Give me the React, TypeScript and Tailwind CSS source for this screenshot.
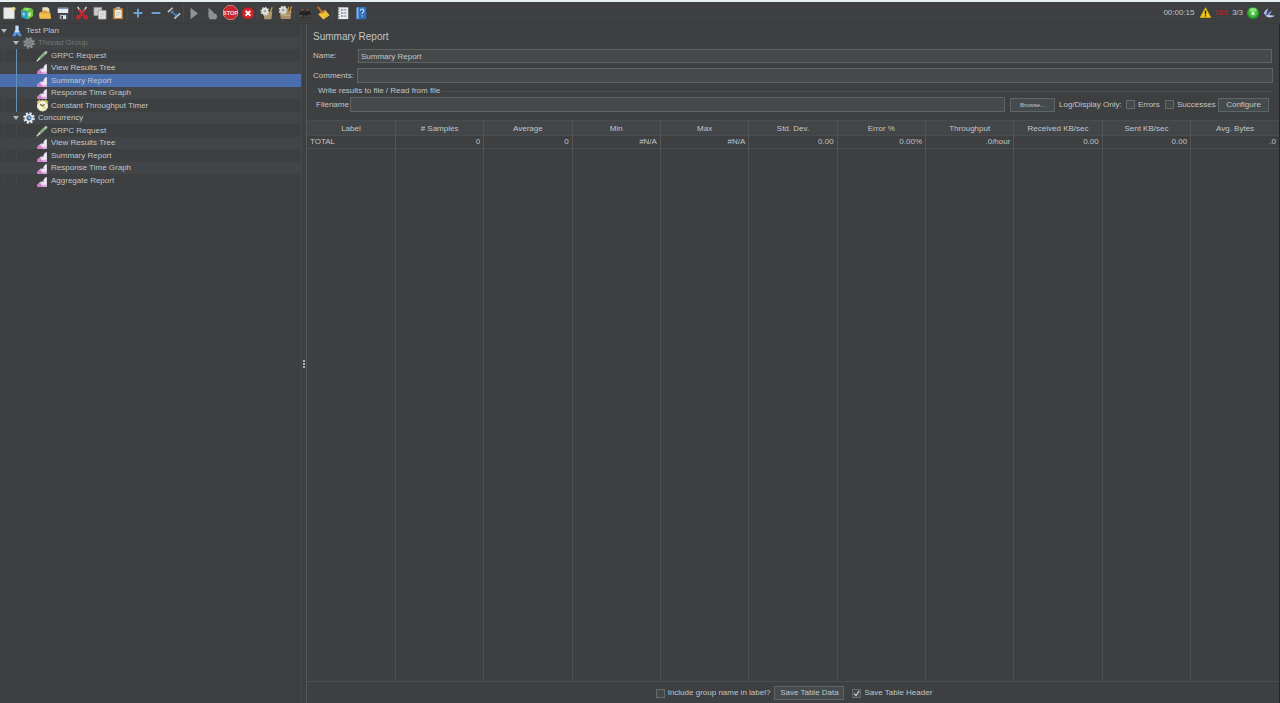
import React, { useState } from 'react';
import clsx from 'clsx';

type IconProps = { children: React.ReactNode; className?: string };

function Icon({ children, className }: IconProps) {
  return (
    <svg viewBox="0 0 16 16" className={clsx('shrink-0', className ?? 'size-[14px]')} aria-hidden="true">
      {children}
    </svg>
  );
}

const NewIcon = () => (
  <Icon>
    <path d="M2 2h12v12.500H2z" fill="#e9ebea" />
    <path d="M2 2h12v12.500H2z" fill="none" stroke="#c9cccb" strokeWidth=".7" />
    <circle cx="13.500" cy="3" r="2" fill="#f0e07a" />
  </Icon>
);

const TemplatesIcon = () => (
  <Icon>
    <path d="M1 5l4-3.500 9 1.200 1 8.300-5 4-8-2z" fill="#4fae3a" />
    <path d="M1 5l7 1.500V15L2 13z" fill="#2e9fc4" />
    <path d="M8 6.500L15 4v7.500L8.500 15z" fill="#6cc644" />
    <path d="M3 4l4-2 6 1.500-4.500 2z" fill="#9be06a" />
    <path d="M9.500 8l3-1v4l-3 1z" fill="#c4ecad" />
    <path d="M3 7.500l2.500.5v3L3 10.500z" fill="#8fd6ea" />
  </Icon>
);

const OpenIcon = () => (
  <Icon>
    <path d="M5 1.500h6l2 2V8H5z" fill="#e8e0c4" />
    <path d="M2 6.500h3l1-1.500h3.500l1 1.500H14V14H2z" fill="#d9a03b" />
    <path d="M1 8.500h13L15 14.500H2z" fill="#f2bd4e" />
  </Icon>
);

const SaveIcon = () => (
  <Icon>
    <path d="M2 2h12v6H2z" fill="#e6e9ee" />
    <path d="M2 2h12v1.500H2z" fill="#8294b5" />
    <path d="M3 9h10.500v6H3z" fill="#4e5964" />
    <path d="M5 10.500h6.500V15H5z" fill="#dfe3e6" />
    <path d="M6 11.500h2V15H6z" fill="#39434d" />
  </Icon>
);

const CutIcon = () => (
  <Icon>
    <path d="M3 1l5 8M13 1L8 9" stroke="#d8d8d8" strokeWidth="1.800" />
    <path d="M4 4l7.500 9M12 4l-7.500 9" stroke="#c9222a" strokeWidth="2.200" />
    <circle cx="3.800" cy="12.800" r="1.700" fill="none" stroke="#d3242b" strokeWidth="1.800" />
    <circle cx="12.200" cy="12.800" r="1.700" fill="none" stroke="#d3242b" strokeWidth="1.800" />
  </Icon>
);

const CopyIcon = () => (
  <Icon>
    <path d="M1 1.500h9V11H1z" fill="#c9cbc8" stroke="#8c8e8c" strokeWidth=".8" />
    <path d="M6 5h9v10H6z" fill="#e4e5e1" stroke="#8c8e8c" strokeWidth=".8" />
    <path d="M8 8h5M8 10h5M8 12h3" stroke="#b8bab6" strokeWidth=".8" />
  </Icon>
);

const PasteIcon = () => (
  <Icon>
    <path d="M2.500 2.500h11V15h-11z" fill="#c78b35" />
    <path d="M4.500 4.500h7.500v9H4.500z" fill="#f0eee6" />
    <path d="M5.500 1h5v3h-5z" fill="#a9aaa6" />
    <path d="M6 7h5M6 9h5M6 11h3" stroke="#b6b6b0" strokeWidth=".8" />
  </Icon>
);

const PlusIcon = () => (
  <Icon>
    <path d="M8 3v10M3 8h10" stroke="#6fa3d8" strokeWidth="2.200" />
  </Icon>
);

const MinusIcon = () => (
  <Icon>
    <path d="M3 8h10" stroke="#6fa3d8" strokeWidth="2.200" />
  </Icon>
);

const ToggleIcon = () => (
  <Icon>
    <path d="M1 7l5.500-5M8.500 14.500L15 8.500" stroke="#c4c8c6" strokeWidth="1.800" />
    <path d="M5 6l6 5.500" stroke="#4b86c6" strokeWidth="1.400" />
    <path d="M5 9V6H8M11 8.500v3H8" stroke="#4b86c6" strokeWidth="1" fill="none" />
  </Icon>
);

const StartIcon = () => (
  <Icon>
    <path d="M4 2l8.500 6.500L4 15z" fill="#8f9293" />
  </Icon>
);

const StartNoPausesIcon = () => (
  <Icon>
    <path d="M4 2l6 5.500L4 13z" fill="#8f9293" />
    <path d="M4 8h5l4 1.500 1 3-1.500 2.500H5z" fill="#8f9293" />
  </Icon>
);

const StopIcon = () => (
  <Icon className="size-[15px]">
    <path d="M5 .5h6L15.500 5v6L11 15.500H5L.5 11V5z" fill="#c9252d" stroke="#dd9a9c" strokeWidth=".8" />
    <text x="8" y="10.300" textAnchor="middle" fontSize="6" fontWeight="700" fill="#f2dede">
      STOP
    </text>
  </Icon>
);

const ShutdownIcon = () => (
  <Icon>
    <path d="M5 2h6l3.500 3.500v5.500L11 14.500H5L1.500 11V5.500z" fill="#d8232a" stroke="#b3151c" strokeWidth=".6" />
    <path d="M5.300 5.500l5.400 5.500M10.700 5.500L5.300 11" stroke="#fff" strokeWidth="2.200" />
  </Icon>
);

const ClearIcon = () => (
  <Icon>
    <path d="M4 8l10-1.500L13 15H5z" fill="#b09a72" />
    <circle cx="5.500" cy="6" r="2.600" fill="#9b9c94" stroke="#e0e1dc" strokeWidth="2.600" />
    <circle cx="5.500" cy="6" r="4.400" fill="none" stroke="#e0e1dc" strokeWidth="1.400" strokeDasharray="1.700 1.700" />
    <path d="M14 1.500L11.500 8" stroke="#c49648" strokeWidth="1.600" />
  </Icon>
);

const ClearAllIcon = () => (
  <Icon className="size-[15px]">
    <path d="M2 9l4-2 8.500-1L13.500 15H3z" fill="#a98e68" />
    <circle cx="5.500" cy="5.500" r="2.600" fill="#9b9c94" stroke="#d9dad5" strokeWidth="2.400" />
    <circle cx="5.500" cy="5.500" r="4.200" fill="none" stroke="#d9dad5" strokeWidth="1.300" strokeDasharray="1.700 1.700" />
    <path d="M14.500 1.500L12.500 7M11.500 2L10 7" stroke="#c49648" strokeWidth="1.400" />
    <path d="M5 11h7.500" stroke="#c7b18a" strokeWidth="1.200" />
  </Icon>
);

const SearchIcon = () => (
  <Icon>
    <path d="M3.500 4H7l.5 3h1L9 4h3.500L15 11l-1 2h-4l-1-2.500H7L6 13H2l-1-2z" fill="#222324" />
    <path d="M3.500 4.500H6.500M9.500 4.500h3" stroke="#8a5a3a" strokeWidth="1.600" />
    <path d="M1.500 11.500h4M10.500 11.500h4" stroke="#6c5a50" strokeWidth="1.800" />
  </Icon>
);

const BroomIcon = () => (
  <Icon>
    <path d="M2 1l5.500 6.500" stroke="#c8702c" strokeWidth="2" />
    <path d="M2.500 9.500L10.500 4.500l5 6-7 5z" fill="#f2c63a" />
    <path d="M5 8L10.500 4.500l1.300 1.500-5.500 3.600z" fill="#e0813a" />
    <path d="M9 11l2 2.500M11 9.500l2 2" stroke="#c4931f" strokeWidth=".8" />
  </Icon>
);

const FunctionHelperIcon = () => (
  <Icon>
    <path d="M2.500 1.500h11.500v13.500H2.500z" fill="#eceeee" />
    <path d="M1 3.500h3M1 6.500h3M1 9.500h3M1 12.500h3" stroke="#4f5458" strokeWidth="1" />
    <path d="M6 4.500h1.500M6 8h1.500M6 11.500h1.500" stroke="#2f5f9e" strokeWidth="1.600" />
    <path d="M8.500 4.500H12M8.500 8H12M8.500 11.500H12" stroke="#75797b" strokeWidth="1" />
  </Icon>
);

const HelpIcon = () => (
  <Icon>
    <path d="M3 2l2-1h9v13l-1 1H3z" fill="#2d6fc0" />
    <path d="M3 2l2-1v13l-2 1z" fill="#8db8e8" />
    <path d="M7.300 5.500c0-2.500 4-2.500 4 0 0 1.500-2 1.500-2 3.500M9.300 10.500v1.700" stroke="#b9d3f0" strokeWidth="1.400" fill="none" />
  </Icon>
);

const WarningIcon = () => (
  <Icon className="size-[13px]">
    <path d="M8 2l6.500 12h-13z" fill="#f3cb1b" stroke="#d8ad10" strokeLinejoin="round" />
    <path d="M8 5.500v5M8 11.500V13" stroke="#30290a" strokeWidth="1.800" />
  </Icon>
);

const RunningIcon = () => (
  <Icon>
    <circle cx="8" cy="8" r="7" fill="#249a2b" />
    <circle cx="8" cy="7.500" r="5.200" fill="#4ac144" />
    <ellipse cx="8" cy="4.500" rx="4" ry="2.200" fill="#8be07e" />
    <circle cx="8" cy="8.500" r="1.900" fill="#dff8d8" />
  </Icon>
);

const FeatherIcon = () => (
  <Icon className="size-3">
    <path d="M1 9C1.500 5.500 4 3 7 2 5.500 5 5 8 4.500 11z" fill="#a9b6ec" />
    <path d="M5 12C6 8.500 8.500 6 12 5c-1.500 2.500-3 5-4 7.500z" fill="#8497e0" />
    <path d="M3 11c2 3.500 8 4 12.500.500-2 0-5-.500-7-.500z" fill="#c2cbf4" />
  </Icon>
);

const FlaskIcon = () => (
  <Icon className="size-3">
    <path d="M6 1h4v5l4.500 9H10l-2-3.500L6 15H1.500L6 6z" fill="#4f94dd" />
    <path d="M6 1h4v5.500l1.500 3h-7L6 6.500z" fill="#c4dff6" />
  </Icon>
);

function GearIcon({ body, core }: { body: string; core: string }) {
  return (
    <Icon className="size-3">
      <circle cx="8" cy="8" r="6.500" fill="none" stroke={body} strokeWidth="2.600" strokeDasharray="2.800 2.300" />
      <circle cx="8" cy="8" r="4.500" fill="none" stroke={body} strokeWidth="2.600" />
      <circle cx="8" cy="8" r="3.200" fill={core} />
      <path d="M8 5.500v2.800h2.500" stroke={body} strokeWidth="1.200" fill="none" />
    </Icon>
  );
}

const SamplerIcon = () => (
  <Icon className="size-3">
    <path d="M4.500 11.500L13.500 3" stroke="#b4c4b0" strokeWidth="3.400" strokeLinecap="round" />
    <path d="M5 11.500L12 5" stroke="#5aa455" strokeWidth="1.600" />
    <path d="M1 15L4.500 11.500" stroke="#dfe2df" strokeWidth="1.600" />
  </Icon>
);

const ChartIcon = () => (
  <Icon className="size-3">
    <path d="M2 15.500v-3l3-2.500 1.500-1.500L9 9l2-4 2-2h1.500v12.500z" fill="#f1eaf5" />
    <path d="M2 15.500V13l2.500-2H7v2.500l2-.500v2.500z" fill="#d277cc" />
    <path d="M9.500 15.500V13h5v2.500z" fill="#dcaae0" />
    <path d="M6.500 10.500l2.500-2.500 2 1" stroke="#a77bd0" strokeWidth="1" fill="none" />
  </Icon>
);

const TimerIcon = () => (
  <Icon className="size-[13px]">
    <circle cx="8" cy="8.500" r="6.200" fill="#f4f2e4" stroke="#e6dfba" strokeWidth="1.400" />
    <path d="M1.500 4.500L5 1.500M14.500 4.500L11 1.500" stroke="#e2c552" strokeWidth="2.200" />
    <path d="M5 6.500l3 2 2.500-2" stroke="#7a6a2c" strokeWidth="1.600" fill="none" />
    <path d="M8 8.500l4 1-2 4z" fill="#e8d26a" />
  </Icon>
);

const toolbarGroups = [
  {
    className: '',
    items: [
      { label: 'New', icon: <NewIcon /> },
      { label: 'Templates', icon: <TemplatesIcon /> },
      { label: 'Open', icon: <OpenIcon /> },
      { label: 'Save', icon: <SaveIcon /> },
    ],
  },
  {
    className: '',
    items: [
      { label: 'Cut', icon: <CutIcon /> },
      { label: 'Copy', icon: <CopyIcon /> },
      { label: 'Paste', icon: <PasteIcon /> },
    ],
  },
  {
    className: 'pl-px',
    items: [
      { label: 'Expand All', icon: <PlusIcon /> },
      { label: 'Collapse All', icon: <MinusIcon /> },
      { label: 'Toggle', icon: <ToggleIcon /> },
    ],
  },
  {
    className: 'pl-px',
    items: [
      { label: 'Start', icon: <StartIcon /> },
      { label: 'Start no pauses', icon: <StartNoPausesIcon /> },
      { label: 'Stop', icon: <StopIcon /> },
      { label: 'Shutdown', icon: <ShutdownIcon /> },
    ],
  },
  {
    className: '',
    items: [
      { label: 'Clear', icon: <ClearIcon /> },
      { label: 'Clear All', icon: <ClearAllIcon /> },
    ],
  },
  {
    className: 'pl-px',
    items: [
      { label: 'Search', icon: <SearchIcon /> },
      { label: 'Reset Search', icon: <BroomIcon /> },
    ],
  },
  {
    className: 'pl-px',
    items: [
      { label: 'Function Helper', icon: <FunctionHelperIcon /> },
      { label: 'Help', icon: <HelpIcon /> },
    ],
  },
];

interface TreeNode {
  label: string;
  level: number;
  icon: React.ReactNode;
  disabled?: boolean;
  active?: boolean;
}

const treeNodes: TreeNode[] = [
  { label: 'Test Plan', level: 0, icon: <FlaskIcon /> },
  { label: 'Thread Group', level: 1, icon: <GearIcon body="#8b8e8f" core="#7c7f80" />, disabled: true },
  { label: 'GRPC Request', level: 2, icon: <SamplerIcon />, active: true },
  { label: 'View Results Tree', level: 2, icon: <ChartIcon />, active: true },
  { label: 'Summary Report', level: 2, icon: <ChartIcon />, active: true },
  { label: 'Response Time Graph', level: 2, icon: <ChartIcon />, active: true },
  { label: 'Constant Throughput Timer', level: 2, icon: <TimerIcon />, active: true },
  { label: 'Concurrency', level: 1, icon: <GearIcon body="#dfe7ee" core="#3f6f9e" /> },
  { label: 'GRPC Request', level: 2, icon: <SamplerIcon /> },
  { label: 'View Results Tree', level: 2, icon: <ChartIcon /> },
  { label: 'Summary Report', level: 2, icon: <ChartIcon /> },
  { label: 'Response Time Graph', level: 2, icon: <ChartIcon /> },
  { label: 'Aggregate Report', level: 2, icon: <ChartIcon /> },
];

const columns = [
  { title: 'Label', total: 'TOTAL' },
  { title: '# Samples', total: '0' },
  { title: 'Average', total: '0' },
  { title: 'Min', total: '#N/A' },
  { title: 'Max', total: '#N/A' },
  { title: 'Std. Dev.', total: '0.00' },
  { title: 'Error %', total: '0.00%' },
  { title: 'Throughput', total: '.0/hour' },
  { title: 'Received KB/sec', total: '0.00' },
  { title: 'Sent KB/sec', total: '0.00' },
  { title: 'Avg. Bytes', total: '.0' },
];

const fieldClass = 'min-w-0 flex-1 border border-[#5f6364] bg-[#45494a] px-[2px] outline-none';
const buttonClass = 'flex h-[14px] items-center justify-center border border-[#5f6668] bg-[#454b4d] whitespace-nowrap';

function Toolbar() {
  return (
    <header className="flex h-[22px] items-center border-b border-[#393b3d] pr-[5px]">
      {toolbarGroups.map((group, i) => (
        <div
          key={i}
          className={clsx('flex items-center', group.className, i > 0 && 'border-l border-[#47494b]')}
        >
          {group.items.map((item) => (
            <button key={item.label} type="button" aria-label={item.label} className="flex w-[18px] justify-center">
              {item.icon}
            </button>
          ))}
        </div>
      ))}
      <div className="ml-auto flex items-center">
        <span>00:00:15</span>
        <span className="ml-1 flex">
          <WarningIcon />
        </span>
        <span className="ml-[3px] text-[#c01f26]">765</span>
        <span className="ml-1">3/3</span>
        <span className="ml-[3px] flex">
          <RunningIcon />
        </span>
        <span className="ml-[3px] flex">
          <FeatherIcon />
        </span>
      </div>
    </header>
  );
}

function TestTree() {
  const [selected, setSelected] = useState(4);

  return (
    <nav className="w-[301px] shrink-0" aria-label="Test plan">
      <ul>
        {treeNodes.map((node, i) => (
          <li
            key={i}
            onClick={() => setSelected(i)}
            className={clsx(
              'flex h-3 cursor-default items-center odd:h-[13px]',
              i === selected ? 'bg-[#4b6eaf]' : i % 2 === 1 && 'bg-[#414547]',
              node.disabled && 'text-[#727576]'
            )}
          >
            {node.level > 0 && (
              <span className="flex w-3 self-stretch pl-1">
                <span className={clsx('w-px', i !== selected && 'bg-[#434648]')} />
              </span>
            )}
            {node.level > 1 && (
              <span className="flex w-[13px] self-stretch pl-1">
                <span className={clsx('w-px', node.active ? 'bg-[#6593b8]' : 'bg-[#434648]')} />
              </span>
            )}
            <span className="flex w-[11px] pl-px">
              {node.level < 2 && (
                <svg viewBox="0 0 6 4" className="h-1 w-1.5" aria-hidden="true">
                  <path d="M0 0h6L3 4z" fill="#b4b6b7" />
                </svg>
              )}
            </span>
            <span className="flex w-3 justify-center">{node.icon}</span>
            <span className="ml-[3px] whitespace-nowrap">{node.label}</span>
          </li>
        ))}
      </ul>
    </nav>
  );
}

function CheckBox({ label, defaultChecked }: { label: string; defaultChecked?: boolean }) {
  return (
    <label className="flex items-center gap-[3px] whitespace-nowrap">
      <span className="grid">
        <input
          type="checkbox"
          defaultChecked={defaultChecked}
          className="peer col-start-1 row-start-1 size-[9px] appearance-none border border-[#666a6b] bg-[#43494a]"
        />
        <svg
          viewBox="0 0 9 9"
          className="pointer-events-none invisible col-start-1 row-start-1 size-[9px] peer-checked:visible"
          aria-hidden="true"
        >
          <path d="M2 4.500l2 2.200L7.200 1.800" fill="none" stroke="#c4c6c6" strokeWidth="1.200" />
        </svg>
      </span>
      {label}
    </label>
  );
}

function ReportForm() {
  return (
    <div className="flex flex-col pr-[6px] pl-[6px]">
      <h1 className="mt-[6px] text-[10px] leading-[14px]">Summary Report</h1>
      <div className="mt-[5px] mr-px flex h-[14px] items-center">
        <label htmlFor="name" className="w-[45px]">
          Name:
        </label>
        <input id="name" defaultValue="Summary Report" className={clsx(fieldClass, 'h-[14px]')} />
      </div>
      <div className="mt-[5px] flex h-[15px] items-center">
        <label htmlFor="comments" className="w-11">
          Comments:
        </label>
        <input id="comments" className={clsx(fieldClass, 'h-[15px]')} />
      </div>
      <fieldset className="mt-[3px] min-w-0 border-t border-[#4c4f50]">
        <legend className="ml-[3px] px-[2px] leading-[10px]">Write results to file / Read from file</legend>
        <div className="flex items-center pt-px pr-1 pl-[3px]">
          <label htmlFor="filename" className="w-[34px]">
            Filename
          </label>
          <input id="filename" className={clsx(fieldClass, 'h-[15px]')} />
          <button type="button" className={clsx(buttonClass, 'ml-[5px] w-[45px] text-[6px]')}>
            Browse...
          </button>
          <span className="ml-1 w-[67px] whitespace-nowrap">Log/Display Only:</span>
          <span className="flex w-[39px]">
            <CheckBox label="Errors" />
          </span>
          <span className="flex w-[53px]">
            <CheckBox label="Successes" />
          </span>
          <button type="button" className={clsx(buttonClass, 'w-[51px]')}>
            Configure
          </button>
        </div>
      </fieldset>
    </div>
  );
}

function ResultsTable() {
  return (
    <div className="mt-2 min-h-0 flex-1">
      <table className="h-full w-full table-fixed border-collapse border-b border-[#4a4d4f]">
        <thead>
          <tr className="h-[15px] border-y border-[#4a4d4f] bg-[#434648]">
            {columns.map((col) => (
              <th key={col.title} scope="col" className="border-r border-[#525557] p-0 pt-px text-center font-normal last:border-r-0">
                {col.title}
              </th>
            ))}
          </tr>
        </thead>
        <tbody>
          <tr className="h-[13px] border-b border-[#4a4d4f]">
            {columns.map((col) => (
              <td
                key={col.title}
                className="border-r border-[#525557] px-[3px] py-0 text-right first:text-left last:border-r-0"
              >
                {col.total}
              </td>
            ))}
          </tr>
          <tr>
            {columns.map((col) => (
              <td key={col.title} className="border-r border-[#4d5052] p-0 last:border-r-0" />
            ))}
          </tr>
        </tbody>
      </table>
    </div>
  );
}

export default function App() {
  return (
    <div className="flex h-screen flex-col border-t-2 border-[#e6eef2] bg-[#3d3f41] font-['Liberation_Sans',Arial,sans-serif] text-[8px] leading-3 text-[#c3c5c6]">
      <Toolbar />
      <div className="flex min-h-0 flex-1">
        <TestTree />
        <div className="flex w-[5px] shrink-0 flex-col items-center justify-center gap-px border-l border-[#46494b]">
          <span className="size-[2px] bg-[#aeb0b1]" />
          <span className="size-[2px] bg-[#aeb0b1]" />
          <span className="size-[2px] bg-[#aeb0b1]" />
        </div>
        <main className="flex min-w-0 flex-1 flex-col border-r border-l border-r-[#232526] border-l-[#55585a]">
          <ReportForm />
          <ResultsTable />
          <footer className="flex h-[21px] items-center justify-center pt-px pl-0.5">
            <CheckBox label="Include group name in label?" />
            <button type="button" className={clsx(buttonClass, 'mr-2 ml-1 w-[70px]')}>
              Save Table Data
            </button>
            <CheckBox label="Save Table Header" defaultChecked />
          </footer>
        </main>
      </div>
    </div>
  );
}
